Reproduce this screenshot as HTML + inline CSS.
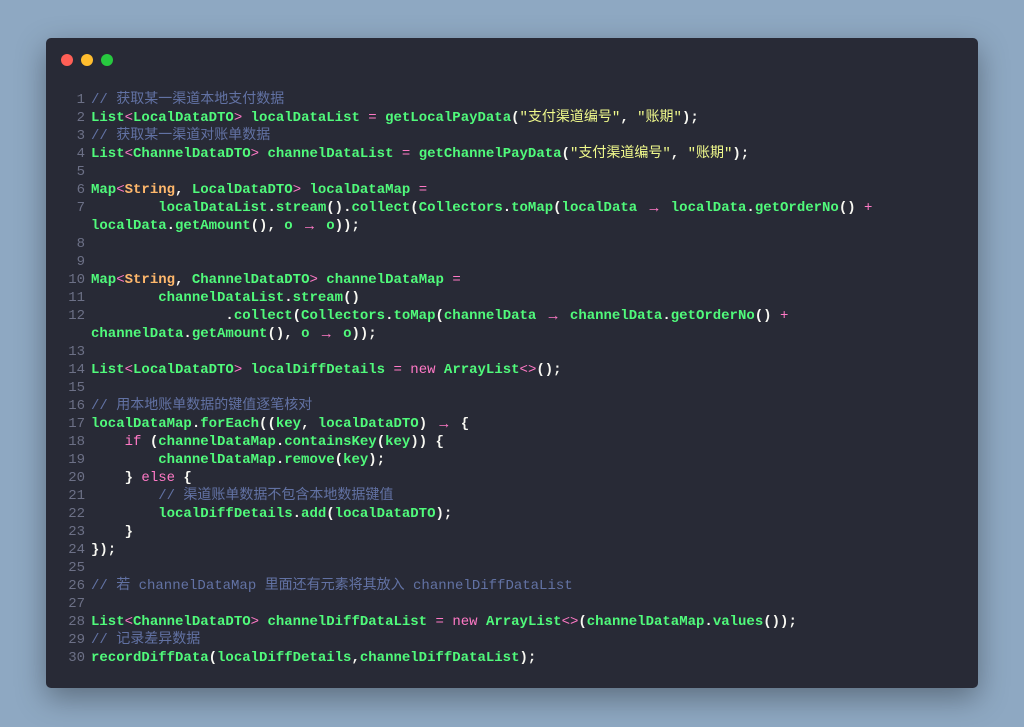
<!DOCTYPE html>
<html><head><meta charset="utf-8"><style>
body{margin:0;width:1024px;height:727px;background:#8ea8c2;overflow:hidden;font-family:"Liberation Mono","Noto Sans CJK SC",monospace}
.win{position:absolute;left:46px;top:38px;width:932px;height:650px;background:#282a36;border-radius:5px;box-shadow:0 10px 30px rgba(0,0,0,.35)}
.d{position:absolute;top:16px;width:12px;height:12px;border-radius:50%}
pre{position:absolute;left:0;top:53px;margin:0;font-family:inherit;font-size:14px;line-height:18px;font-weight:bold;color:#f8f8f2;white-space:pre}
.n{display:inline-block;width:39px;text-align:right;color:#6c7086;font-weight:normal;padding-right:6px}
.c{color:#6272a4;font-weight:normal}.g{color:#50fa7b}.p{color:#ff79c6;font-weight:normal}.o{color:#ffb86c}.y{color:#f1fa8c;font-weight:normal}
.a{display:inline-block;width:16.8px;text-align:center;color:#ff79c6;font-weight:normal;font-family:"Liberation Sans",sans-serif;font-size:15px;line-height:18px;vertical-align:top}
</style></head><body><div class="win">
<div class="d" style="left:15px;background:#ff5f56"></div><div class="d" style="left:35px;background:#ffbd2e"></div><div class="d" style="left:55px;background:#27c93f"></div>
<pre><span class="n">1</span><span class="c">// 获取某一渠道本地支付数据</span>
<span class="n">2</span><span class="g">List</span><span class="p">&lt;</span><span class="g">LocalDataDTO</span><span class="p">&gt;</span> <span class="g">localDataList</span> <span class="p">=</span> <span class="g">getLocalPayData</span>(<span class="y">"支付渠道编号"</span>, <span class="y">"账期"</span>);
<span class="n">3</span><span class="c">// 获取某一渠道对账单数据</span>
<span class="n">4</span><span class="g">List</span><span class="p">&lt;</span><span class="g">ChannelDataDTO</span><span class="p">&gt;</span> <span class="g">channelDataList</span> <span class="p">=</span> <span class="g">getChannelPayData</span>(<span class="y">"支付渠道编号"</span>, <span class="y">"账期"</span>);
<span class="n">5</span>
<span class="n">6</span><span class="g">Map</span><span class="p">&lt;</span><span class="o">String</span>, <span class="g">LocalDataDTO</span><span class="p">&gt;</span> <span class="g">localDataMap</span> <span class="p">=</span>
<span class="n">7</span>        <span class="g">localDataList</span>.<span class="g">stream</span>().<span class="g">collect</span>(<span class="g">Collectors</span>.<span class="g">toMap</span>(<span class="g">localData</span> <span class="a">→</span> <span class="g">localData</span>.<span class="g">getOrderNo</span>() <span class="p">+</span>
<span class="n"></span><span class="g">localData</span>.<span class="g">getAmount</span>(), <span class="g">o</span> <span class="a">→</span> <span class="g">o</span>));
<span class="n">8</span>
<span class="n">9</span>
<span class="n">10</span><span class="g">Map</span><span class="p">&lt;</span><span class="o">String</span>, <span class="g">ChannelDataDTO</span><span class="p">&gt;</span> <span class="g">channelDataMap</span> <span class="p">=</span>
<span class="n">11</span>        <span class="g">channelDataList</span>.<span class="g">stream</span>()
<span class="n">12</span>                .<span class="g">collect</span>(<span class="g">Collectors</span>.<span class="g">toMap</span>(<span class="g">channelData</span> <span class="a">→</span> <span class="g">channelData</span>.<span class="g">getOrderNo</span>() <span class="p">+</span>
<span class="n"></span><span class="g">channelData</span>.<span class="g">getAmount</span>(), <span class="g">o</span> <span class="a">→</span> <span class="g">o</span>));
<span class="n">13</span>
<span class="n">14</span><span class="g">List</span><span class="p">&lt;</span><span class="g">LocalDataDTO</span><span class="p">&gt;</span> <span class="g">localDiffDetails</span> <span class="p">=</span> <span class="p">new</span> <span class="g">ArrayList</span><span class="p">&lt;&gt;</span>();
<span class="n">15</span>
<span class="n">16</span><span class="c">// 用本地账单数据的键值逐笔核对</span>
<span class="n">17</span><span class="g">localDataMap</span>.<span class="g">forEach</span>((<span class="g">key</span>, <span class="g">localDataDTO</span>) <span class="a">→</span> {
<span class="n">18</span>    <span class="p">if</span> (<span class="g">channelDataMap</span>.<span class="g">containsKey</span>(<span class="g">key</span>)) {
<span class="n">19</span>        <span class="g">channelDataMap</span>.<span class="g">remove</span>(<span class="g">key</span>);
<span class="n">20</span>    } <span class="p">else</span> {
<span class="n">21</span>        <span class="c">// 渠道账单数据不包含本地数据键值</span>
<span class="n">22</span>        <span class="g">localDiffDetails</span>.<span class="g">add</span>(<span class="g">localDataDTO</span>);
<span class="n">23</span>    }
<span class="n">24</span>});
<span class="n">25</span>
<span class="n">26</span><span class="c">// 若 channelDataMap 里面还有元素将其放入 channelDiffDataList</span>
<span class="n">27</span>
<span class="n">28</span><span class="g">List</span><span class="p">&lt;</span><span class="g">ChannelDataDTO</span><span class="p">&gt;</span> <span class="g">channelDiffDataList</span> <span class="p">=</span> <span class="p">new</span> <span class="g">ArrayList</span><span class="p">&lt;&gt;</span>(<span class="g">channelDataMap</span>.<span class="g">values</span>());
<span class="n">29</span><span class="c">// 记录差异数据</span>
<span class="n">30</span><span class="g">recordDiffData</span>(<span class="g">localDiffDetails</span>,<span class="g">channelDiffDataList</span>);</pre>
</div></body></html>
